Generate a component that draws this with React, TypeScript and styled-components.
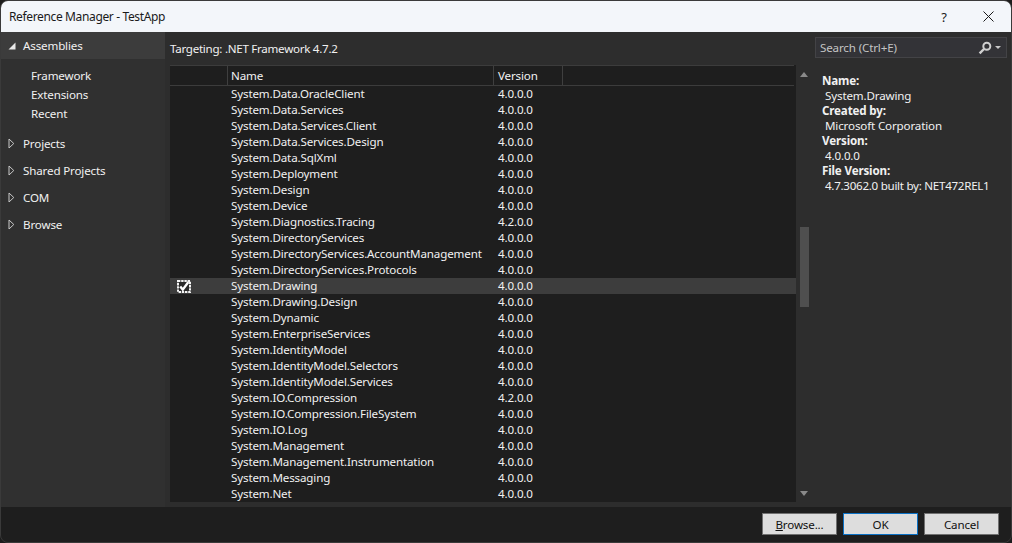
import React from "react";
import styled, { createGlobalStyle } from "styled-components";

const GlobalStyle = createGlobalStyle`
    html, body {
        margin: 0;
        padding: 0;
        background: #1c1c1c;
    }
    * {
        box-sizing: border-box;
    }
`;

const references: [string, string][] = [
    ["System.Data.OracleClient", "4.0.0.0"],
    ["System.Data.Services", "4.0.0.0"],
    ["System.Data.Services.Client", "4.0.0.0"],
    ["System.Data.Services.Design", "4.0.0.0"],
    ["System.Data.SqlXml", "4.0.0.0"],
    ["System.Deployment", "4.0.0.0"],
    ["System.Design", "4.0.0.0"],
    ["System.Device", "4.0.0.0"],
    ["System.Diagnostics.Tracing", "4.2.0.0"],
    ["System.DirectoryServices", "4.0.0.0"],
    ["System.DirectoryServices.AccountManagement", "4.0.0.0"],
    ["System.DirectoryServices.Protocols", "4.0.0.0"],
    ["System.Drawing", "4.0.0.0"],
    ["System.Drawing.Design", "4.0.0.0"],
    ["System.Dynamic", "4.0.0.0"],
    ["System.EnterpriseServices", "4.0.0.0"],
    ["System.IdentityModel", "4.0.0.0"],
    ["System.IdentityModel.Selectors", "4.0.0.0"],
    ["System.IdentityModel.Services", "4.0.0.0"],
    ["System.IO.Compression", "4.2.0.0"],
    ["System.IO.Compression.FileSystem", "4.0.0.0"],
    ["System.IO.Log", "4.0.0.0"],
    ["System.Management", "4.0.0.0"],
    ["System.Management.Instrumentation", "4.0.0.0"],
    ["System.Messaging", "4.0.0.0"],
    ["System.Net", "4.0.0.0"],
];

const details = [
    ["Name:", "System.Drawing"],
    ["Created by:", "Microsoft Corporation"],
    ["Version:", "4.0.0.0"],
    ["File Version:", "4.7.3062.0 built by: NET472REL1"],
];

const CheckMark = () => (
    <svg width="14" height="13" viewBox="0 0 14 13">
        <rect x="1" y="1" width="12" height="11" fill="#2a2a2a" stroke="#f4f4f4" strokeWidth="2" strokeDasharray="2.4 0.8" />
        <path d="M3.2 6.4 L5.8 9.6 L11.4 2" fill="none" stroke="#ffffff" strokeWidth="2.4" />
    </svg>
);

const SearchIcon = () => (
    <svg width="14" height="14" viewBox="0 0 14 14">
        <circle cx="8.8" cy="5.2" r="3.5" fill="none" stroke="#d0d0d0" strokeWidth="2" />
        <path d="M6 8 L1.6 12.4" stroke="#d0d0d0" strokeWidth="2.4" />
    </svg>
);

const CloseIcon = () => (
    <svg width="11" height="11" viewBox="0 0 11 11">
        <path d="M0.5 0.5 L10.5 10.5 M10.5 0.5 L0.5 10.5" stroke="#1a1a1a" strokeWidth="1" />
    </svg>
);

const Expander = ({ open }: { open?: boolean }) =>
    open ? (
        <svg width="8" height="8" viewBox="0 0 8 8">
            <path d="M7.5 0.5 V7.5 H0.5 Z" fill="#e8e8e8" />
        </svg>
    ) : (
        <svg width="7" height="11" viewBox="0 0 7 11">
            <path d="M1 1 L5.8 5.5 L1 10 Z" fill="none" stroke="#c8c8c8" strokeWidth="1" />
        </svg>
    );

const App = () => {
    return (
        <Window>
            <GlobalStyle />
            <TitleBar>
                <Title>Reference Manager - TestApp</Title>
                <HelpButton>?</HelpButton>
                <CloseButton>
                    <CloseIcon />
                </CloseButton>
            </TitleBar>
            <Body>
                <Sidebar>
                    <SectionHead $active>
                        <ExpanderSlot>
                            <Expander open />
                        </ExpanderSlot>
                        Assemblies
                    </SectionHead>
                    <SubList>
                        <SubItem>Framework</SubItem>
                        <SubItem>Extensions</SubItem>
                        <SubItem>Recent</SubItem>
                    </SubList>
                    {["Projects", "Shared Projects", "COM", "Browse"].map((name) => (
                        <SectionHead key={name}>
                            <ExpanderSlot>
                                <Expander />
                            </ExpanderSlot>
                            {name}
                        </SectionHead>
                    ))}
                </Sidebar>
                <Main>
                    <Targeting>Targeting: .NET Framework 4.7.2</Targeting>
                    <ListArea>
                        <List>
                            <Header>
                                <HeaderCell />
                                <HeaderCell>Name</HeaderCell>
                                <HeaderCell>Version</HeaderCell>
                            </Header>
                            {references.map(([name, version]) => {
                                const selected = name === "System.Drawing";
                                return (
                                    <Row key={name} $selected={selected}>
                                        <CheckCell>{selected && <CheckMark />}</CheckCell>
                                        <Cell>{name}</Cell>
                                        <Cell>{version}</Cell>
                                    </Row>
                                );
                            })}
                        </List>
                        <Scrollbar>
                            <ArrowUp />
                            <Track>
                                <Thumb />
                            </Track>
                            <ArrowDown />
                        </Scrollbar>
                    </ListArea>
                </Main>
                <Aside>
                    <SearchBox>
                        <SearchText>Search (Ctrl+E)</SearchText>
                        <SearchIcon />
                        <SearchCaret />
                    </SearchBox>
                    <Details>
                        {details.map(([label, value]) => (
                            <React.Fragment key={label}>
                                <DetailLabel>{label}</DetailLabel>
                                <DetailValue>{value}</DetailValue>
                            </React.Fragment>
                        ))}
                    </Details>
                </Aside>
            </Body>
            <Footer>
                <Button>
                    <u>B</u>rowse...
                </Button>
                <Button $primary>OK</Button>
                <Button>Cancel</Button>
            </Footer>
        </Window>
    );
};

export default App;

const Window = styled.div`
    width: 1012px;
    height: 543px;
    display: flex;
    flex-direction: column;
    overflow: hidden;
    border: 1px solid #3a3a3a;
    border-radius: 8px;
    background: #2f2f2f;
    color: #f1f1f1;
    font-family: "Noto Sans", "Open Sans", sans-serif;
    font-size: 11.6px;
    letter-spacing: -0.15px;
`;

const TitleBar = styled.div`
    height: 31px;
    flex: none;
    display: flex;
    align-items: center;
    background: #f3f6fa;
    color: #1a1a1a;
`;

const Title = styled.div`
    flex: 1;
    padding-left: 8px;
    font-size: 12px;
    letter-spacing: -0.36px;
`;

const HelpButton = styled.div`
    width: 46px;
    padding-left: 4px;
    text-align: center;
    font-size: 13px;
`;

const CloseButton = styled.div`
    width: 46px;
    display: flex;
    justify-content: center;
`;

const Body = styled.div`
    flex: 1;
    min-height: 0;
    display: flex;
`;

const Sidebar = styled.div`
    width: 164px;
    flex: none;
    display: flex;
    flex-direction: column;
    background: #303030;
`;

const SectionHead = styled.div<{ $active?: boolean }>`
    height: 27px;
    flex: none;
    display: flex;
    align-items: center;
    background: ${(p) => (p.$active ? "#3c3c3c" : "transparent")};
`;

const ExpanderSlot = styled.span`
    width: 22px;
    padding-left: 7px;
    display: flex;
    align-items: center;
`;

const SubList = styled.div`
    display: flex;
    flex-direction: column;
    padding: 7px 0 7px 30px;
`;

const SubItem = styled.div`
    height: 19px;
    line-height: 19px;
`;

const Main = styled.div`
    width: 647px;
    flex: none;
    display: flex;
    flex-direction: column;
    padding-left: 5px;
    background: #2d2d2d;
`;

const Targeting = styled.div`
    height: 33px;
    flex: none;
    padding-top: 8px;
    line-height: 17px;
    letter-spacing: -0.28px;
`;

const ListArea = styled.div`
    height: 437px;
    flex: none;
    display: flex;
`;

const List = styled.div`
    width: 626px;
    flex: none;
    overflow: hidden;
    background: #1e1e1e;
`;

const Header = styled.div`
    height: 21px;
    display: grid;
    grid-template-columns: 58px 266px 69px;
    border-top: 1px solid #3c3c3c;
    border-bottom: 1px solid #3c3c3c;
    margin-right: 2px;
`;

const HeaderCell = styled.div`
    padding-left: 3px;
    line-height: 19px;
    border-right: 1px solid #3f3f3f;

    &:last-child {
        padding-left: 4px;
    }
`;

const Row = styled.div<{ $selected?: boolean }>`
    height: 16px;
    display: grid;
    grid-template-columns: 58px 266px 69px;
    align-items: center;
    background: ${(p) => (p.$selected ? "#3d3d3d" : "transparent")};
`;

const Cell = styled.div`
    padding-left: 3px;
    line-height: 16px;
    white-space: nowrap;

    &:last-child {
        padding-left: 4px;
    }
`;

const CheckCell = styled.div`
    display: flex;
    align-items: center;
    padding-left: 7px;
`;

const Scrollbar = styled.div`
    width: 16px;
    flex: none;
    display: flex;
    flex-direction: column;
    align-items: center;
`;

const ArrowUp = styled.div`
    flex: none;
    margin-top: 7px;
    width: 0;
    height: 0;
    border-left: 4.5px solid transparent;
    border-right: 4.5px solid transparent;
    border-bottom: 5px solid #8a8a8a;
`;

const ArrowDown = styled.div`
    flex: none;
    margin-bottom: 6px;
    width: 0;
    height: 0;
    border-left: 4.5px solid transparent;
    border-right: 4.5px solid transparent;
    border-top: 5px solid #8a8a8a;
`;

const Track = styled.div`
    flex: 1;
    padding-top: 150px;
`;

const Thumb = styled.div`
    width: 9px;
    height: 80px;
    background: #4f4f4f;
`;

const Aside = styled.div`
    flex: 1;
    display: flex;
    flex-direction: column;
    padding-left: 3px;
    background: #2d2d2d;
`;

const SearchBox = styled.div`
    width: 192px;
    height: 21px;
    margin-top: 5px;
    flex: none;
    display: flex;
    align-items: center;
    padding: 0 5px 0 4px;
    border: 1px solid #434346;
    background: #333337;
`;

const SearchText = styled.span`
    flex: 1;
    color: #c4c4c4;
`;

const SearchCaret = styled.span`
    margin-left: 3px;
    width: 0;
    height: 0;
    border-left: 3px solid transparent;
    border-right: 3px solid transparent;
    border-top: 3px solid #c8c8c8;
`;

const Details = styled.div`
    padding: 15px 0 0 7px;
    line-height: 15px;
`;

const DetailLabel = styled.div`
    font-weight: 700;
`;

const DetailValue = styled.div`
    padding-left: 3px;
    white-space: nowrap;

    &:last-child {
        letter-spacing: -0.28px;
    }
`;

const Footer = styled.div`
    height: 35px;
    flex: none;
    display: flex;
    justify-content: flex-end;
    gap: 6px;
    padding: 6px 12px 0 0;
    background: #1e1e1e;
`;

const Button = styled.div<{ $primary?: boolean }>`
    width: 75px;
    height: 22px;
    display: flex;
    align-items: center;
    justify-content: center;
    background: #dddddd;
    color: #111111;
    border: 1px solid ${(p) => (p.$primary ? "#0a70c4" : "#707070")};
    white-space: pre;
`;
